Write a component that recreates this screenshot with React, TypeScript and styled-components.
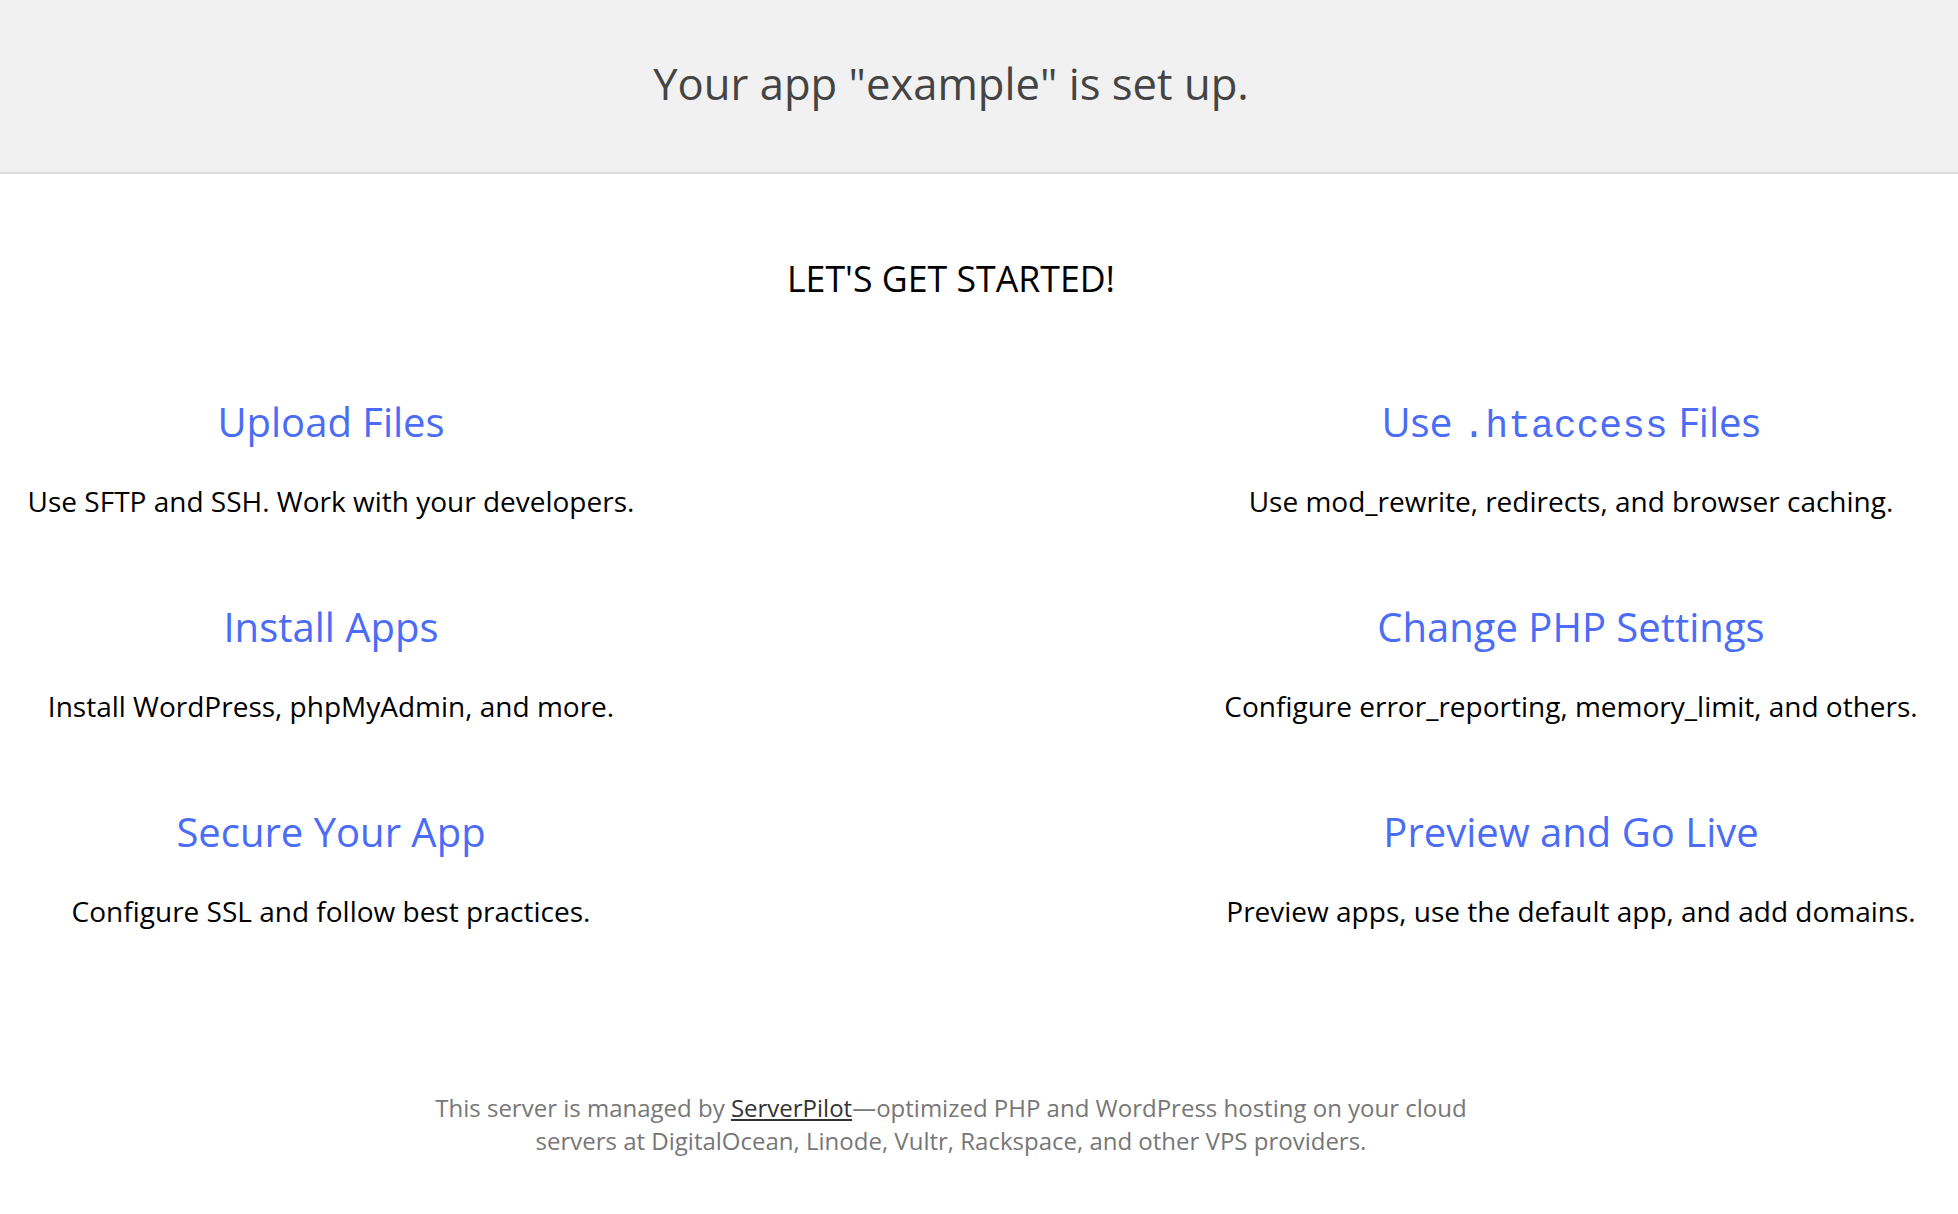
import styled, { createGlobalStyle } from 'styled-components';

const GlobalStyle = createGlobalStyle`
  html, body {
    margin: 0;
    padding: 0;
    background: #fff;
  }
  body {
    font-family: 'Open Sans', 'Liberation Sans', sans-serif;
    color: #000;
  }
`;

const ScHeader = styled.header`
  height: 174px;
  display: flex;
  align-items: center;
  justify-content: center;
  padding: 0 56px 5px 0;
  box-sizing: border-box;
  background-color: #f1f1f1;
  border-bottom: 2px solid #dcdcdc;
`;

const ScHeaderTitle = styled.h1`
  margin: 0;
  font-size: 43.6px;
  font-weight: 400;
  line-height: 1.2;
  color: #444;
`;

const ScMain = styled.main`
  padding-top: 83px;
  padding-bottom: 60px;
`;

const ScHeading = styled.h2`
  margin: 0 56px 0 0;
  text-align: center;
  font-size: 35.7px;
  font-weight: 400;
  line-height: 43px;
  color: #000;
`;

const ScGrid = styled.div`
  display: grid;
  grid-template-columns: 662px 774px;
  justify-content: space-between;
  margin-top: 98px;
`;

const ScColumn = styled.div`
  display: flex;
  flex-direction: column;
  gap: 84px;
  text-align: center;
`;

const ScTask = styled.div`
  display: flex;
  flex-direction: column;
  align-items: center;
  gap: 37px;
`;

const ScTaskTitle = styled.a`
  height: 48px;
  font-size: 40px;
  line-height: 48px;
  color: #4a6cf7;
  text-decoration: none;
  white-space: nowrap;
`;

const ScCode = styled.code`
  font-family: 'Liberation Mono', 'DejaVu Sans Mono', monospace;
  font-size: 38px;
  line-height: 1;
`;

const ScTaskText = styled.p`
  margin: 0;
  font-size: 28px;
  line-height: 36px;
  color: #000;
  white-space: nowrap;
`;

const ScFooter = styled.footer`
  margin: 162px 56px 0 0;
  text-align: center;
  font-size: 24px;
  line-height: 33px;
  color: #777;
`;

const ScFooterLink = styled.a`
  color: #333;
  text-decoration: underline;
`;

interface Task {
  title: React.ReactNode;
  text: string;
}

const leftTasks: Task[] = [
  { title: 'Upload Files', text: 'Use SFTP and SSH. Work with your developers.' },
  { title: 'Install Apps', text: 'Install WordPress, phpMyAdmin, and more.' },
  { title: 'Secure Your App', text: 'Configure SSL and follow best practices.' },
];

const rightTasks: Task[] = [
  {
    title: (
      <>
        Use <ScCode>.htaccess</ScCode> Files
      </>
    ),
    text: 'Use mod_rewrite, redirects, and browser caching.',
  },
  {
    title: 'Change PHP Settings',
    text: 'Configure error_reporting, memory_limit, and others.',
  },
  {
    title: 'Preview and Go Live',
    text: 'Preview apps, use the default app, and add domains.',
  },
];

const TaskList: React.FC<{ tasks: Task[] }> = ({ tasks }) => (
  <ScColumn>
    {tasks.map((task, i) => (
      <ScTask key={i}>
        <ScTaskTitle href="#">{task.title}</ScTaskTitle>
        <ScTaskText>{task.text}</ScTaskText>
      </ScTask>
    ))}
  </ScColumn>
);

export default function App() {
  return (
    <>
      <GlobalStyle />
      <ScHeader>
        <ScHeaderTitle>Your app "example" is set up.</ScHeaderTitle>
      </ScHeader>
      <ScMain>
        <ScHeading>LET'S GET STARTED!</ScHeading>
        <ScGrid>
          <TaskList tasks={leftTasks} />
          <TaskList tasks={rightTasks} />
        </ScGrid>
        <ScFooter>
          This server is managed by <ScFooterLink href="#">ServerPilot</ScFooterLink>
          —optimized PHP and WordPress hosting on your cloud
          <br />
          servers at DigitalOcean, Linode, Vultr, Rackspace, and other VPS providers.
        </ScFooter>
      </ScMain>
    </>
  );
}
